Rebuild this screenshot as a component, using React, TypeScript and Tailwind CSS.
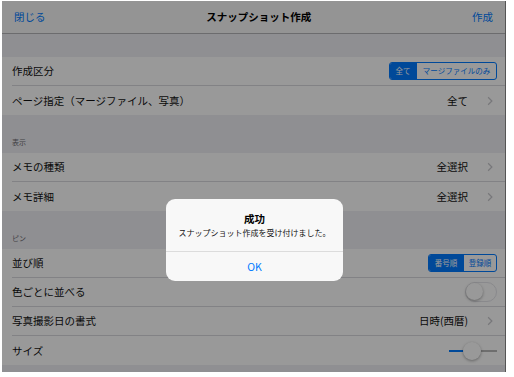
import React from "react";

/* ───────────── small pieces ───────────── */

const Chevron = () => (
  <svg viewBox="0 0 8 13" className="w-[6px] h-[10px] ml-[19px]" fill="none" stroke="#c7c7cc" strokeWidth="1.6">
    <path d="M1.5 1.5l5 5-5 5" />
  </svg>
);

const Row = ({
  label,
  children,
  last = false,
}: {
  label: string;
  children?: React.ReactNode;
  last?: boolean;
}) => (
  <div className="bg-white pl-[10px]">
    <div
      className={
        "h-[29px] flex items-center justify-between pr-[8px] " +
        (last ? "" : "border-b border-[#d9d9de]")
      }
    >
      <span className="text-[10.5px] text-[#111]">{label}</span>
      <div className="flex items-center">{children}</div>
    </div>
  </div>
);

const Value = ({ text }: { text: string }) => (
  <>
    <span className="text-[10.5px] text-[#111]">{text}</span>
    <Chevron />
    <span className="w-[4px]" />
  </>
);

const Segmented = ({ items, widths }: { items: string[]; widths: string[] }) => (
  <div className="flex h-[18px] rounded-[3px] border border-[#007aff] overflow-hidden text-[7.5px]">
    {items.map((it, i) => (
      <div
        key={it}
        className={
          "flex items-center justify-center " +
          widths[i] +
          (i === 0 ? " bg-[#007aff] text-white" : " text-[#007aff] border-l border-[#007aff]")
        }
      >
        {it}
      </div>
    ))}
  </div>
);

const Section = ({ label, h }: { label?: string; h: string }) => (
  <div className={"flex items-end pl-[10px] pb-[6px] text-[7px] text-[#6d6d72] " + h}>{label}</div>
);

/* ───────────── screen ───────────── */

export default function App() {
  return (
    <div
      className="w-[514px] h-[377px] bg-white pl-[2px] pt-[1px]"
      style={{ fontFamily: '"Noto Sans CJK JP", "Noto Sans", sans-serif' }}
    >
      <div className="relative w-[504px] h-[371px] bg-[#efeff4] border-r border-[#555] overflow-hidden">
        {/* nav bar */}
        <div className="h-[33px] bg-[#f7f7f7] border-b border-[#b5b5b8] flex items-center justify-between px-[12px]">
          <span className="text-[10.5px] text-[#007aff]">閉じる</span>
          <span className="text-[10.5px] font-bold text-black">スナップショット作成</span>
          <span className="text-[10.5px] text-[#007aff]">作成</span>
        </div>

        <Section h="h-[23px]" />
        <Row label="作成区分">
          <Segmented items={["全て", "マージファイルのみ"]} widths={["w-[26px]", "w-[80px]"]} />
        </Row>
        <Row label="ページ指定（マージファイル、写真）" last>
          <Value text="全て" />
        </Row>

        <Section label="表示" h="h-[38px]" />
        <Row label="メモの種類">
          <Value text="全選択" />
        </Row>
        <Row label="メモ詳細" last>
          <Value text="全選択" />
        </Row>

        <Section label="ピン" h="h-[38px]" />
        <Row label="並び順">
          <Segmented items={["番号順", "登録順"]} widths={["w-[34px]", "w-[33px]"]} />
        </Row>
        <Row label="色ごとに並べる">
          <div className="w-[32px] h-[20px] rounded-full border-[1.5px] border-[#e5e5ea] bg-white relative">
            <div className="absolute left-0 top-0 w-[17px] h-[17px] rounded-full bg-white shadow-[0_1px_3px_rgba(0,0,0,0.35)]" />
          </div>
        </Row>
        <Row label="写真撮影日の書式">
          <Value text="日時(西暦)" />
        </Row>
        <Row label="サイズ" last>
          <div className="relative w-[48px] h-[20px] flex items-center">
            <div className="w-[17px] h-[2px] bg-[#007aff]" />
            <div className="flex-1 h-[2px] bg-[#b7b7b7]" />
            <div className="absolute left-[14px] top-[1px] w-[18px] h-[18px] rounded-full bg-white shadow-[0_1px_3px_rgba(0,0,0,0.35)]" />
          </div>
        </Row>

        {/* dim */}
        <div className="absolute inset-0 bg-black/40" />

        {/* alert */}
        <div className="absolute left-[164px] top-[198px] w-[177px] rounded-[9px] bg-[#f8f8f8] overflow-hidden">
          <div className="pt-[13px] pb-[12px] flex flex-col items-center">
            <span className="text-[10.5px] font-bold text-black leading-[14px]">成功</span>
            <span className="text-[8px] text-[#111] leading-[12px] mt-[1px]">スナップショット作成を受け付けました。</span>
          </div>
          <div className="h-[30px] border-t border-[#dcdcdc] flex items-center justify-center text-[10.5px] text-[#007aff]">
            OK
          </div>
        </div>
      </div>
    </div>
  );
}
